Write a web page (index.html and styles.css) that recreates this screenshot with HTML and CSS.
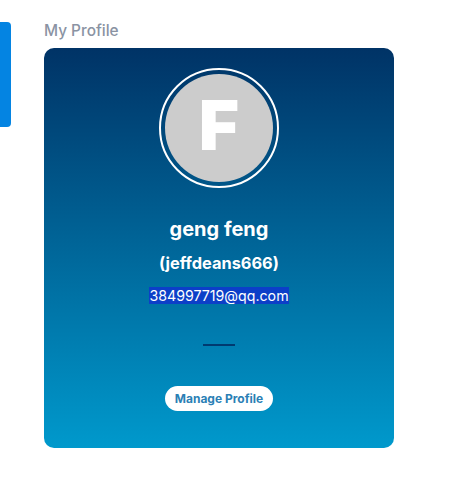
FILE: index.html
```html
<!DOCTYPE html>
<html>
<head>
<meta charset="utf-8">
<link rel="stylesheet" href="styles.css">
</head>
<body>
<div class="page">
  <div class="side-tab"></div>
  <main class="main">
    <h2 class="title">My Profile</h2>
    <section class="card">
      <div class="ring">
        <div class="avatar"><span class="initial">F</span></div>
      </div>
      <div class="name">geng feng</div>
      <div class="handle">(jeffdeans666)</div>
      <div class="email"><span class="sel">384997719@qq.com</span></div>
      <div class="divider"></div>
      <button class="manage">Manage Profile</button>
    </section>
  </main>
</div>
</body>
</html>
```

FILE: styles.css
```css
html, body {
  margin: 0;
  padding: 0;
  background: #ffffff;
  font-family: Inter, "Noto Sans", sans-serif;
}
.page {
  display: flex;
  align-items: flex-start;
}
.side-tab {
  width: 11px;
  height: 105px;
  margin-top: 22px;
  background: #0484e2;
  border-radius: 0 4px 4px 0;
  flex: none;
}
.main {
  margin-left: 33px;
  padding-top: 21px;
}
.title {
  margin: 0 0 7px 0;
  font-size: 15.4px;
  line-height: 20px;
  font-weight: 500;
  color: #8a93a3;
}
.card {
  box-sizing: border-box;
  width: 350px;
  height: 400px;
  border-radius: 10px;
  background: linear-gradient(180deg, #003366 0%, #0099cc 100%);
  padding-top: 20px;
  display: flex;
  flex-direction: column;
  align-items: center;
  color: #ffffff;
}
.ring {
  box-sizing: border-box;
  width: 120px;
  height: 120px;
  border: 2px solid #ffffff;
  border-radius: 50%;
  padding: 4px;
}
.avatar {
  box-sizing: border-box;
  width: 108px;
  height: 108px;
  border-radius: 50%;
  background: #cccccc;
  display: flex;
  align-items: center;
  justify-content: center;
  padding-bottom: 6px;
}
.initial {
  font-size: 69px;
  line-height: 1;
  font-weight: 900;
  color: #ffffff;
}
.name {
  margin-top: 29px;
  font-size: 20px;
  line-height: 24px;
  font-weight: 700;
}
.handle {
  margin-top: 12px;
  font-size: 16.4px;
  line-height: 20px;
  font-weight: 700;
}
.email {
  margin-top: 13px;
  font-size: 14.2px;
  line-height: 20px;
  font-weight: 400;
}
.sel {
  background: #0c3fc8;
  color: #ffffff;
}
.divider {
  margin-top: 38px;
  width: 32px;
  height: 2px;
  background: #003a70;
}
.manage {
  margin-top: 40px;
  height: 25px;
  width: 108px;
  border: none;
  border-radius: 13px;
  background: #ffffff;
  color: #2b7fb5;
  font-family: Inter, "Noto Sans", sans-serif;
  font-size: 12px;
  font-weight: 700;
  padding: 0;
  cursor: pointer;
}
```
